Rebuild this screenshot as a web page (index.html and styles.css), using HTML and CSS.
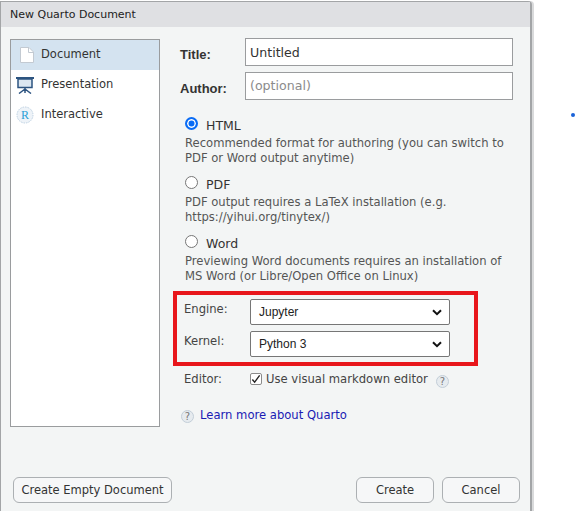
FILE: index.html
```html
<!DOCTYPE html>
<html lang="en">
<head>
  <meta charset="UTF-8">
  <title>New Quarto Document</title>
  <link rel="stylesheet" href="styles.css">
</head>
<body>
  <div class="dialog">
    <div class="titlebar">New Quarto Document</div>
    <div class="main">
      <ul class="sidebar">
        <li class="side-item selected">
          <svg class="side-icon" width="14" height="16" viewBox="0 0 14 16"><path d="M.5.5h8.5l4.500 4.500v10.500h-13z" fill="#fff" stroke="#c3cad2"/><path d="M8.500.5v5h5" fill="none" stroke="#c3cad2"/></svg>
          <span>Document</span>
        </li>
        <li class="side-item">
          <svg class="side-icon" width="18" height="17" viewBox="0 0 18 17"><path d="M0 1h18" stroke="#2d5480" stroke-width="2"/><path d="M2 2h14v8.500h-14z" fill="#dbe6f0" stroke="#2d5480" stroke-width="1.500"/><path d="M9 11v2M9 12l-6 4.500M9 12l6 4.500M9 12v4" stroke="#2d5480" stroke-width="1.500" fill="none"/></svg>
          <span>Presentation</span>
        </li>
        <li class="side-item">
          <svg class="side-icon" width="18" height="18" viewBox="0 0 18 18"><circle cx="9" cy="9" r="8" fill="#eef3f8" stroke="#bcd0e2" stroke-dasharray="1.500 1"/><text x="9" y="13" class="r-glyph">R</text></svg>
          <span>Interactive</span>
        </li>
      </ul>

      <div class="form">
        <div class="field">
          <label class="field-label">Title:</label>
          <div class="text-input">Untitled</div>
        </div>
        <div class="field">
          <label class="field-label">Author:</label>
          <div class="text-input placeholder">(optional)</div>
        </div>

        <div class="formats">
          <div class="format">
            <div class="format-name"><span class="radio checked"></span>HTML</div>
            <p>Recommended format for authoring (you can switch to PDF or Word output anytime)</p>
          </div>
          <div class="format">
            <div class="format-name"><span class="radio"></span>PDF</div>
            <p>PDF output requires a LaTeX installation (e.g. https://yihui.org/tinytex/)</p>
          </div>
          <div class="format">
            <div class="format-name"><span class="radio"></span>Word</div>
            <p>Previewing Word documents requires an installation of MS Word (or Libre/Open Office on Linux)</p>
          </div>
        </div>

        <div class="highlight">
          <div class="select-row">
            <span class="select-label">Engine:</span>
            <div class="select">Jupyter<svg width="10" height="7" viewBox="0 0 10 7"><path d="M1 1.200l4 4 4-4" fill="none" stroke="#111" stroke-width="2"/></svg></div>
          </div>
          <div class="select-row">
            <span class="select-label">Kernel:</span>
            <div class="select">Python 3<svg width="10" height="7" viewBox="0 0 10 7"><path d="M1 1.200l4 4 4-4" fill="none" stroke="#111" stroke-width="2"/></svg></div>
          </div>
        </div>

        <div class="editor-row">
          <span class="editor-label">Editor:</span>
          <span class="checkbox"><svg width="11" height="10" viewBox="0 0 11 10"><path d="M1.500 5.500l2.500 3 5.500-7.500" fill="none" stroke="#222" stroke-width="1.500"/></svg></span>
          <span class="editor-text">Use visual markdown editor</span>
          <span class="help">?</span>
        </div>

        <div class="learn-row">
          <span class="help">?</span>
          <a class="learn" href="#">Learn more about Quarto</a>
        </div>
      </div>
    </div>

    <div class="footer">
      <button class="btn empty">Create Empty Document</button>
      <div class="footer-right">
        <button class="btn wide">Create</button>
        <button class="btn wide">Cancel</button>
      </div>
    </div>
  </div>
  <span class="dot"></span>
</body>
</html>
```

FILE: styles.css
```css
html, body {
  margin: 0;
  height: 100%;
  background: #fff;
  overflow: hidden;
}
body {
  font-family: "DejaVu Sans", sans-serif;
  font-size: 12px;
  color: #333;
  position: relative;
}
.dialog {
  box-sizing: border-box;
  width: 532px;
  height: 511px;
  margin-top: 1px;
  border: 1px solid #a3a5a7;
  border-width: 1px 2px 0 1px;
  border-top-right-radius: 4px;
  background: #f3f5f5;
  box-shadow: 2px 0 0 #d9dadb;
  display: flex;
  flex-direction: column;
}
.titlebar {
  height: 25px;
  line-height: 26px;
  padding-left: 9px;
  background: #dfe0e3;
  font-size: 11px;
  color: #222;
}
.main {
  display: flex;
  padding: 12px 0 0 9px;
}
.sidebar {
  box-sizing: border-box;
  list-style: none;
  margin: 0;
  padding: 0;
  width: 150px;
  height: 388px;
  background: #fff;
  border: 1px solid #9a9c9e;
}
.side-item {
  height: 30px;
  display: flex;
  align-items: center;
  font-size: 11.500px;
  color: #333;
}
.side-item span {
  margin-bottom: 2px;
}
.side-item.selected {
  background: #d4e3f0;
}
.side-icon {
  flex: none;
  margin: 0 7px 0 5px;
}
.side-item.selected .side-icon {
  margin-left: 9px;
  margin-right: 7px;
}
.r-glyph {
  font-family: "Liberation Serif", serif;
  font-size: 12px;
  fill: #2a9fd6;
  text-anchor: middle;
}
.form {
  width: 338px;
  margin-left: 15px;
  margin-top: -1px;
}
.field {
  display: flex;
  align-items: center;
  margin-bottom: 6px;
}
.field-label {
  width: 65px;
  font-weight: bold;
  font-family: "Liberation Sans", sans-serif;
  font-size: 13px;
  color: #333;
  margin-left: 5px;
  padding-top: 4px;
}
.text-input {
  box-sizing: border-box;
  width: 268px;
  height: 28px;
  line-height: 27px;
  padding-left: 4px;
  background: #fff;
  border: 1px solid #9a9c9e;
  font-size: 12.600px;
  color: #333;
}
.text-input.placeholder {
  line-height: 25px;
  color: #8b8b8b;
}
.formats {
  margin: 14px 0 0 10px;
}
.format {
  margin-bottom: 8px;
}
.format-name {
  height: 22px;
  display: flex;
  align-items: center;
  font-size: 12.500px;
}
.format p {
  margin: 0;
  font-size: 11.600px;
  line-height: 14.500px;
  color: #555;
  width: 330px;
}
.radio {
  box-sizing: border-box;
  width: 13px;
  height: 13px;
  margin-right: 8px;
  margin-bottom: 3px;
  border: 1px solid #767676;
  border-radius: 50%;
  background: #fff;
}
.radio.checked {
  border: 2px solid #0a6cf5;
  box-shadow: inset 0 0 0 1.500px #fff;
  background: #0a6cf5;
}
.highlight {
  box-sizing: border-box;
  width: 305px;
  height: 75px;
  margin-top: 8px;
  margin-left: -2px;
  padding: 4px 0 0 7px;
  border: 4px solid #e8161c;
}
.select-row {
  display: flex;
  margin-bottom: 6px;
}
.select-label {
  width: 66px;
  padding-top: 3px;
  font-size: 11.600px;
  color: #444;
}
.select {
  box-sizing: border-box;
  width: 200px;
  height: 26px;
  padding: 0 7px 0 8px;
  display: flex;
  align-items: center;
  justify-content: space-between;
  background: #fff;
  border: 1px solid #767676;
  border-radius: 2px;
  font-family: "Liberation Sans", sans-serif;
  font-size: 12px;
  color: #222;
}
.editor-row {
  display: flex;
  align-items: center;
  margin: 4px 0 0 9px;
  height: 18px;
}
.editor-label {
  width: 66px;
  font-size: 11.600px;
  color: #444;
}
.checkbox {
  box-sizing: border-box;
  width: 12px;
  height: 12px;
  margin-right: 4px;
  display: flex;
  align-items: center;
  justify-content: center;
  background: #fff;
  border: 1px solid #8b8b8b;
  border-radius: 2px;
}
.editor-text {
  font-size: 11.600px;
  color: #444;
  margin-right: 8px;
}
.help {
  box-sizing: border-box;
  flex: none;
  width: 13px;
  height: 13px;
  margin-top: 4px;
  line-height: 11px;
  text-align: center;
  font-size: 10px;
  color: #777;
  background: #e6ebef;
  border: 1px solid #c3ced8;
  border-radius: 50%;
}
.learn-row {
  display: flex;
  align-items: center;
  margin: 18px 0 0 6px;
}
.learn {
  margin-left: 6px;
  font-size: 11.600px;
  color: #1a1ab4;
  text-decoration: none;
}
.footer {
  display: flex;
  justify-content: space-between;
  margin: 50px 10px 0 12px;
}
.footer-right {
  display: flex;
  gap: 8px;
}
.btn {
  height: 26px;
  padding: 0;
  background: #f6f7f8;
  border: 1px solid #acb0b3;
  border-radius: 6px;
  font-family: "DejaVu Sans", sans-serif;
  font-size: 11.500px;
  color: #333;
}
.btn.empty {
  width: 159px;
}
.btn.wide {
  width: 78px;
}
.dot {
  position: absolute;
  left: 571px;
  top: 113px;
  width: 4px;
  height: 4px;
  border-radius: 50%;
  background: #1a63d8;
}
```
